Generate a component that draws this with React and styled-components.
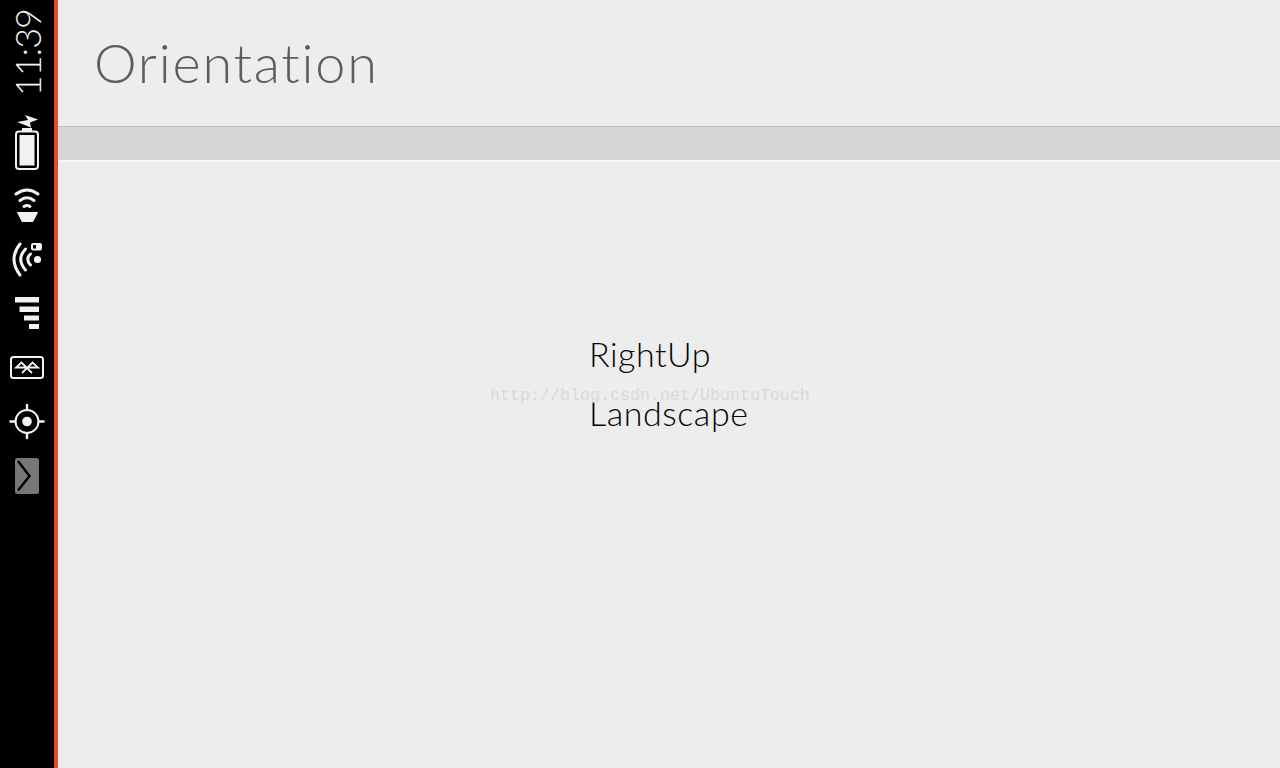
import React from 'react';
import styled, { createGlobalStyle } from 'styled-components';

const GlobalStyle = createGlobalStyle`
  html, body {
    margin: 0;
    padding: 0;
    height: 100%;
    overflow: hidden;
    background: #ededed;
  }
`;

const ICON_COLOR = '#f2f2f2';

const Icon = ({ top, height, children }) => (
  <IconSlot viewBox={`0 ${top} 54 ${height}`} $height={height}>
    {children}
  </IconSlot>
);

const App = () => (
  <Page>
    <GlobalStyle />
    <Launcher>
      <TimeSlot>
        <Time>11:39</Time>
      </TimeSlot>

      {/* battery, charging */}
      <Icon top={112} height={66}>
        <polygon points="17,122 28,120 25,115 38,119.5 30,122.5 31,127.5" fill={ICON_COLOR} />
        <rect x="22" y="128" width="10" height="4" fill={ICON_COLOR} />
        <rect x="16" y="131.5" width="22" height="37.5" rx="3" fill="none" stroke={ICON_COLOR} strokeWidth="2" />
        <rect x="19.5" y="135" width="15" height="30.5" fill={ICON_COLOR} />
      </Icon>

      {/* sound */}
      <Icon top={178} height={54}>
        <g fill="none" stroke={ICON_COLOR} strokeWidth="3" strokeLinecap="round">
          <path d="M16 194 Q27 186 38 194" />
          <path d="M20 200.5 Q27 195 34 200.5" />
          <path d="M24 206.5 Q27 204.5 30 206.5" />
        </g>
        <polygon points="17,212 38,212 37,214.5 33,222 22,222 18,214.5" fill={ICON_COLOR} />
      </Icon>

      {/* wifi */}
      <Icon top={232} height={54}>
        <g fill="none" stroke={ICON_COLOR} strokeWidth="3" strokeLinecap="round">
          <path d="M20 244 Q8 259 20 275" />
          <path d="M25.5 249 Q16 259 25.5 270" />
          <path d="M30.5 254 Q25 259 30.5 265" />
        </g>
        <circle cx="37.5" cy="259.5" r="3.6" fill={ICON_COLOR} />
        <rect x="31" y="243" width="11" height="7.5" rx="2" fill={ICON_COLOR} />
        <rect x="33" y="245" width="3" height="3.5" fill="#000" />
      </Icon>

      {/* cell signal */}
      <Icon top={286} height={54}>
        <SignalBar x="15" y="297" width="24" height="5.5" />
        <SignalBar x="19.5" y="306.5" width="19.5" height="5.5" />
        <SignalBar x="24" y="315.5" width="15" height="5" />
        <SignalBar x="29" y="324" width="10" height="5" />
      </Icon>

      {/* bluetooth */}
      <Icon top={340} height={54}>
        <rect x="11" y="357" width="32" height="21" rx="2.5" fill="none" stroke={ICON_COLOR} strokeWidth="2" />
        <g fill="none" stroke={ICON_COLOR} strokeWidth="1.8">
          <path d="M22 373 L32.5 362.5 L38 367.5 H16 L21.5 362.5 L32 373" />
        </g>
      </Icon>

      {/* location */}
      <Icon top={394} height={54}>
        <circle cx="27" cy="421.5" r="11.5" fill="none" stroke={ICON_COLOR} strokeWidth="2" />
        <circle cx="27" cy="421.5" r="4.8" fill={ICON_COLOR} />
        <g stroke={ICON_COLOR} strokeWidth="2.4" strokeLinecap="round">
          <path d="M27 405 V410" />
          <path d="M27 433 V438" />
          <path d="M10.5 421.5 H15" />
          <path d="M39 421.5 H43.5" />
        </g>
      </Icon>

      {/* launcher handle */}
      <Icon top={448} height={54}>
        <rect x="15" y="458" width="24" height="36" rx="2.5" fill="#777" />
        <path d="M18 461 L29.5 476 L18 490.5" fill="none" stroke="#000" strokeWidth="2.4" />
      </Icon>
    </Launcher>

    <Main>
      <Header>
        <Title>Orientation</Title>
      </Header>
      <TabBar />
      <Content>
        <Label>RightUp</Label>
        <Label>Landscape</Label>
      </Content>
      <Watermark>http://blog.csdn.net/UbuntuTouch</Watermark>
    </Main>
  </Page>
);

const Page = styled.div`
  display: flex;
  width: 1280px;
  height: 768px;
  overflow: hidden;
  background: #ededed;
  font-variant-ligatures: none;
`;

const Launcher = styled.div`
  flex: none;
  display: flex;
  flex-direction: column;
  width: 54px;
  height: 768px;
  background: #000;
  border-right: 4px solid #e64d22;
`;

const TimeSlot = styled.div`
  flex: none;
  display: flex;
  justify-content: center;
  align-items: flex-start;
  height: 112px;
  padding-top: 9px;
  box-sizing: border-box;
`;

const Time = styled.div`
  writing-mode: vertical-rl;
  transform: rotate(180deg);
  font-family: 'Lato', sans-serif;
  font-weight: 300;
  font-size: 36px;
  line-height: 36px;
  letter-spacing: -1px;
  color: ${ICON_COLOR};
`;

const IconSlot = styled.svg`
  flex: none;
  display: block;
  width: 54px;
  height: ${(p) => p.$height}px;
`;

const SignalBar = styled.rect`
  fill: ${ICON_COLOR};
`;

const Main = styled.div`
  position: relative;
  flex: 1;
  display: flex;
  flex-direction: column;
  min-width: 0;
`;

const Header = styled.div`
  flex: none;
  display: flex;
  align-items: center;
  height: 126px;
  padding-left: 36px;
  box-sizing: border-box;
`;

const Title = styled.div`
  font-family: 'Lato', sans-serif;
  font-weight: 300;
  font-size: 54px;
  line-height: 1;
  letter-spacing: 1.75px;
  color: #5d5d5d;
`;

const TabBar = styled.div`
  flex: none;
  height: 33px;
  background: #d6d6d6;
  border-top: 1px solid #bcbcbc;
  border-bottom: 2px solid #f7f7f7;
`;

const Content = styled.div`
  flex: 1;
  display: flex;
  flex-direction: column;
  padding: 162px 0 0 531px;
`;

const Label = styled.div`
  font-family: 'Lato', sans-serif;
  font-weight: 300;
  font-size: 34px;
  line-height: 59px;
  letter-spacing: 0.55px;
  color: #050505;
`;

const Watermark = styled.div`
  position: absolute;
  left: 432px;
  top: 386px;
  font-family: 'Liberation Mono', monospace;
  font-size: 16.67px;
  line-height: 20px;
  white-space: nowrap;
  color: #d9d9d4;
`;

export default App;
